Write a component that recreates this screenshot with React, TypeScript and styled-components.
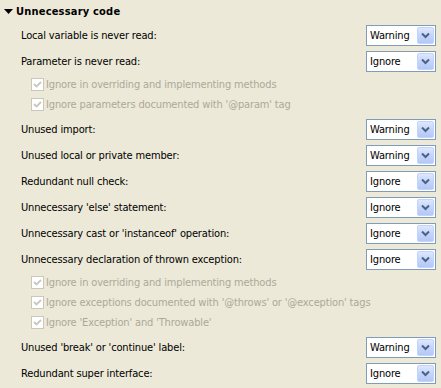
import React from 'react';
import styled, { createGlobalStyle } from 'styled-components';

const GlobalStyle = createGlobalStyle`
  html, body {
    margin: 0;
    padding: 0;
    background: #ece9d8;
  }
  body {
    font-family: "DejaVu Sans Condensed", "Liberation Sans", Arial, sans-serif;
    font-stretch: condensed;
    font-size: 11px;
    letter-spacing: -0.15px;
    color: #000;
  }
`;

const Panel = styled.div`
  width: 441px;
  height: 388px;
  background: #ece9d8;
  overflow: hidden;
`;

const Section = styled.div`
  display: flex;
  align-items: center;
  height: 22px;
  padding-left: 4px;
  font-weight: bold;
  font-size: 11px;
  letter-spacing: 0.2px;
`;

const Twisty = styled.svg`
  width: 9px;
  height: 9px;
  margin-right: 3px;
`;

const Row = styled.div`
  display: flex;
  align-items: center;
  justify-content: space-between;
  height: 26px;
  padding: 0 5px 0 21px;
`;

const Label = styled.span`
  white-space: nowrap;
`;

const Group = styled.div`
  padding-bottom: 2px;
`;

const CheckRow = styled.div`
  display: flex;
  align-items: center;
  height: 20px;
  padding-left: 31px;
  color: #aca899;
  white-space: nowrap;
`;

const Box = styled.span`
  width: 11px;
  height: 11px;
  border: 1px solid #cac8bb;
  background: #fff;
  display: flex;
  align-items: center;
  justify-content: center;
  margin-right: 2px;
`;

const Combo = styled.div`
  display: flex;
  align-items: center;
  justify-content: space-between;
  width: 70px;
  height: 21px;
  box-sizing: border-box;
  border: 1px solid #7f9db9;
  background: #fff;
  padding: 1px 1px 1px 3px;
`;

const ComboText = styled.span`
  font-size: 11px;
`;

const Button = styled.span`
  width: 17px;
  height: 17px;
  box-sizing: border-box;
  border: 1px solid #c3d3fd;
  border-radius: 2px;
  background: linear-gradient(180deg, #dde8fe 0%, #c4d5fc 50%, #b4c8f6 100%);
  display: flex;
  align-items: center;
  justify-content: center;
`;

type Level = 'Warning' | 'Ignore';

const Select = ({ value }: { value: Level }) => (
  <Combo>
    <ComboText>{value}</ComboText>
    <Button>
      <svg width="9" height="7" viewBox="0 0 9 7">
        <path d="M1 1.5 L4.5 5 L8 1.5" fill="none" stroke="#4d6185" strokeWidth="2" />
      </svg>
    </Button>
  </Combo>
);

const Check = ({ label }: { label: string }) => (
  <CheckRow>
    <Box>
      <svg width="9" height="9" viewBox="0 0 9 9">
        <path d="M1 4 L3.5 6.5 L8 2" fill="none" stroke="#cac8bb" strokeWidth="1.8" />
      </svg>
    </Box>
    {label}
  </CheckRow>
);

const Option = ({ label, value }: { label: string; value: Level }) => (
  <Row>
    <Label>{label}</Label>
    <Select value={value} />
  </Row>
);

export default function App() {
  return (
    <Panel>
      <GlobalStyle />
      <Section>
        <Twisty viewBox="0 0 9 9">
          <path d="M0 2 L9 2 L4.5 7 Z" fill="#000" />
        </Twisty>
        Unnecessary code
      </Section>
      <Option label="Local variable is never read:" value="Warning" />
      <Option label="Parameter is never read:" value="Ignore" />
      <Group>
        <Check label="Ignore in overriding and implementing methods" />
        <Check label="Ignore parameters documented with '@param' tag" />
      </Group>
      <Option label="Unused import:" value="Warning" />
      <Option label="Unused local or private member:" value="Warning" />
      <Option label="Redundant null check:" value="Ignore" />
      <Option label="Unnecessary 'else' statement:" value="Ignore" />
      <Option label="Unnecessary cast or 'instanceof' operation:" value="Ignore" />
      <Option label="Unnecessary declaration of thrown exception:" value="Ignore" />
      <Group>
        <Check label="Ignore in overriding and implementing methods" />
        <Check label="Ignore exceptions documented with '@throws' or '@exception' tags" />
        <Check label="Ignore 'Exception' and 'Throwable'" />
      </Group>
      <Option label="Unused 'break' or 'continue' label:" value="Warning" />
      <Option label="Redundant super interface:" value="Ignore" />
    </Panel>
  );
}
